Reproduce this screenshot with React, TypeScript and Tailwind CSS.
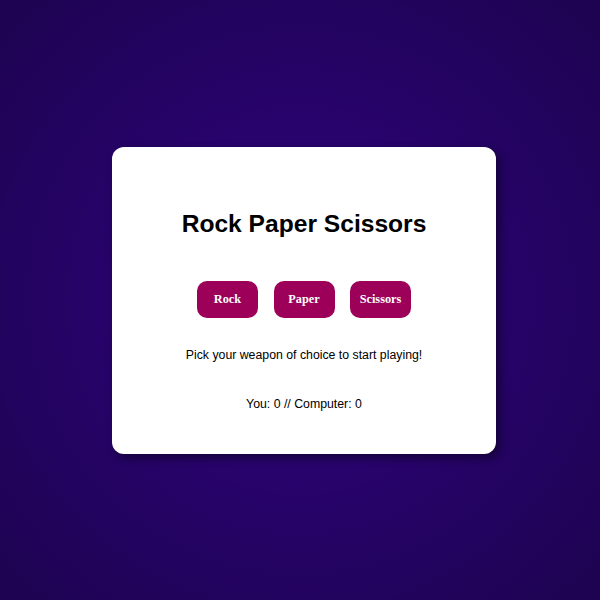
export default function App() {
  return (
    <div className="min-h-screen w-full flex items-center justify-center bg-[radial-gradient(ellipse_at_center,#2d0479_0%,#27036a_45%,#1d0350_100%)] font-['Liberation_Sans',Arial,sans-serif]">
      <div className="ml-2 w-[384px] h-[307px] bg-white rounded-[12px] shadow-[4px_4px_10px_rgba(0,0,0,0.45)] flex flex-col items-center pt-[63px]">
        <h1 className="text-[24.6px] leading-[28px] font-bold text-black">Rock Paper Scissors</h1>
        <div className="mt-[43px] flex gap-[15.5px]">
          {["Rock", "Paper", "Scissors"].map((t) => (
            <button
              key={t}
              className="w-[61px] h-[37px] rounded-[10px] bg-[#9c0058] text-white text-[12.3px] font-bold font-['Liberation_Serif',serif]"
            >
              {t}
            </button>
          ))}
        </div>
        <p className="mt-[30px] text-[12.3px] leading-[15px] text-black">Pick your weapon of choice to start playing!</p>
        <p className="mt-[34px] text-[12.3px] leading-[15px] text-black">You: 0 // Computer: 0</p>
      </div>
    </div>
  );
}
